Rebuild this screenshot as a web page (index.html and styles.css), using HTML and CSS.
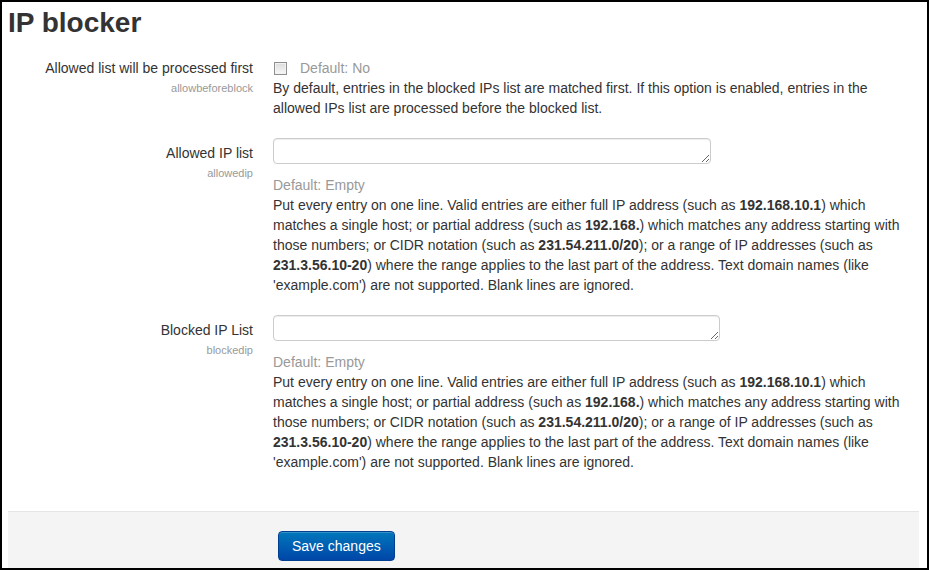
FILE: index.html
```html
<!DOCTYPE html>
<html>
<head>
<meta charset="utf-8">
<link rel="stylesheet" href="styles.css">
</head>
<body>
<div class="page">
  <h2 class="title">IP blocker</h2>

  <div class="row">
    <div class="label">
      <div class="name">Allowed list will be processed first</div>
      <div class="setting">allowbeforeblock</div>
    </div>
    <div class="control control-check">
      <div class="check-line"><input type="checkbox" class="check"><span class="default">Default: No</span></div>
      <div class="desc">By default, entries in the blocked IPs list are matched first. If this option is enabled, entries in the allowed IPs list are processed before the blocked list.</div>
    </div>
  </div>

  <div class="row">
    <div class="label">
      <div class="name">Allowed IP list</div>
      <div class="setting">allowedip</div>
    </div>
    <div class="control">
      <textarea class="area area-allowed"></textarea>
      <div class="default">Default: Empty</div>
      <div class="desc">Put every entry on one line. Valid entries are either full IP address (such as <b>192.168.10.1</b>) which matches a single host; or partial address (such as <b>192.168.</b>) which matches any address starting with those numbers; or CIDR notation (such as <b>231.54.211.0/20</b>); or a range of IP addresses (such as <b>231.3.56.10-20</b>) where the range applies to the last part of the address. Text domain names (like 'example.com') are not supported. Blank lines are ignored.</div>
    </div>
  </div>

  <div class="row">
    <div class="label">
      <div class="name">Blocked IP List</div>
      <div class="setting">blockedip</div>
    </div>
    <div class="control">
      <textarea class="area area-blocked"></textarea>
      <div class="default">Default: Empty</div>
      <div class="desc">Put every entry on one line. Valid entries are either full IP address (such as <b>192.168.10.1</b>) which matches a single host; or partial address (such as <b>192.168.</b>) which matches any address starting with those numbers; or CIDR notation (such as <b>231.54.211.0/20</b>); or a range of IP addresses (such as <b>231.3.56.10-20</b>) where the range applies to the last part of the address. Text domain names (like 'example.com') are not supported. Blank lines are ignored.</div>
    </div>
  </div>

  <div class="footer">
    <button class="btn-primary" type="button">Save changes</button>
  </div>
</div>
</body>
</html>
```

FILE: styles.css
```css
* { box-sizing: border-box; }
html, body { margin: 0; padding: 0; background: #fff; }
body {
  font-family: "Liberation Sans", Arial, sans-serif;
  font-size: 14px;
  line-height: 20px;
  color: #333;
}
.page {
  width: 929px;
  height: 570px;
  border: 2px solid #000;
  padding: 1px 8px 0 6px;
  overflow: hidden;
}
.title {
  margin: 0 0 10px 0;
  font-size: 28px;
  line-height: 40px;
  font-weight: bold;
  color: #333;
}
.row {
  display: grid;
  grid-template-columns: 245px 1fr;
  column-gap: 20px;
  margin-bottom: 20px;
}
.label {
  text-align: right;
  padding-top: 5px;
}
.setting {
  font-size: 11px;
  line-height: 20px;
  color: #999;
}
.desc { max-width: 634px; }
.control-check { padding-top: 5px; }
.check-line {
  display: flex;
  align-items: center;
  height: 20px;
}
.check {
  -webkit-appearance: none;
  appearance: none;
  width: 13px;
  height: 13px;
  margin: 0 13px 0 1px;
  border: 1px solid #8f8f8f;
  background: linear-gradient(#dcdcdc, #f7f7f7);
  box-shadow: inset 0 0 0 1px #f2f2f2;
}
.default { color: #999; }
.area {
  display: block;
  height: 26px;
  margin: 0 0 11px 0;
  padding: 4px 6px;
  border: 1px solid #ccc;
  border-radius: 4px;
  box-shadow: inset 0 1px 1px rgba(0,0,0,0.075);
  font-family: "Liberation Sans", Arial, sans-serif;
  font-size: 14px;
  resize: both;
}
.area-allowed { width: 438px; }
.area-blocked { width: 447px; }
.footer {
  margin-top: 39px;
  background: #f4f4f4;
  border-top: 1px solid #e5e5e5;
  padding: 19px 20px 20px 270px;
}
.btn-primary {
  height: 30px;
  padding: 0 13px;
  font-family: "Liberation Sans", Arial, sans-serif;
  font-size: 14px;
  color: #fff;
  border: 1px solid #003e8f;
  border-radius: 4px;
  background: linear-gradient(#0077bb, #0046a8);
  box-shadow: inset 0 1px 0 rgba(255,255,255,0.2);
}
```
